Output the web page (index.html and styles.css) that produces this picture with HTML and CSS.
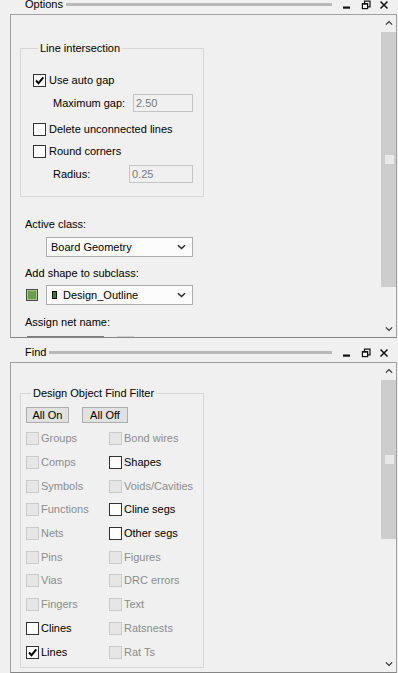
FILE: index.html
```html
<!DOCTYPE html>
<html lang="en">
<head>
  <meta charset="UTF-8" />
  <meta name="viewport" content="width=device-width, initial-scale=1.0"/>
  <title>Options / Find</title>
  <link rel="stylesheet" href="styles.css">
</head>
<body>

  <!-- Options panel -->
  <div class="titlebar titlebar-top">
    <span class="title">Options</span>
    <span class="grip"></span>
    <span class="win-btns">
      <svg class="win-icon" viewBox="0 0 10 10"><rect x="1" y="6.5" width="7" height="2.2" fill="#111"/></svg>
      <svg class="win-icon" viewBox="0 0 10 10"><path d="M3.5 3V1.2H9V6.8H7" fill="none" stroke="#111" stroke-width="1.2"/><rect x="1.4" y="3.6" width="5.2" height="5" fill="none" stroke="#111" stroke-width="1.2"/><rect x="1" y="3" width="6" height="1.6" fill="#111"/></svg>
      <svg class="win-icon" viewBox="0 0 10 10"><path d="M1.5 1.5L8.5 8.5M8.5 1.5L1.5 8.5" stroke="#111" stroke-width="1.5"/></svg>
    </span>
  </div>

  <div class="frame frame-options">
    <div class="frame-body">
      <fieldset class="group group-line">
        <legend>Line intersection</legend>
        <div class="check-row"><span class="cb is-on"><svg viewBox="0 0 11 11"><path d="M2 5.5L4.5 8.2L9.3 2.3" fill="none" stroke="#000" stroke-width="1.9"/></svg></span>Use auto gap</div>
        <div class="field-row field-gap"><span>Maximum gap:</span><span class="input is-disabled">2.50</span></div>
        <div class="check-row"><span class="cb"></span>Delete unconnected lines</div>
        <div class="check-row"><span class="cb"></span>Round corners</div>
        <div class="field-row"><span>Radius:</span><span class="input input-radius is-disabled">0.25</span></div>
      </fieldset>

      <div class="label label-active">Active class:</div>
      <div class="select-row">
        <div class="select"><span class="select-text">Board Geometry</span><svg class="chev" viewBox="0 0 9 6"><path d="M1 1.2L4.5 4.6L8 1.2" fill="none" stroke="#222" stroke-width="1.4"/></svg></div>
      </div>

      <div class="label label-sub">Add shape to subclass:</div>
      <div class="select-row select-row-sub">
        <span class="swatch"></span>
        <div class="select"><span class="mini-swatch"></span><span class="select-text">Design_Outline</span><svg class="chev" viewBox="0 0 9 6"><path d="M1 1.2L4.5 4.6L8 1.2" fill="none" stroke="#222" stroke-width="1.4"/></svg></div>
      </div>

      <div class="label label-net">Assign net name:</div>
      <div class="net-row">
        <span class="net-input"></span>
        <span class="net-btn"></span>
      </div>
    </div>
    <div class="scrollbar">
      <div class="sb-btn"><svg viewBox="0 0 9 6"><path d="M1 4.8L4.5 1.4L8 4.8" fill="none" stroke="#333" stroke-width="1.4"/></svg></div>
      <div class="sb-track">
        <div class="sb-thumb thumb-options"><span class="sb-grip"></span></div>
      </div>
      <div class="sb-btn"><svg viewBox="0 0 9 6"><path d="M1 1.2L4.5 4.6L8 1.2" fill="none" stroke="#333" stroke-width="1.4"/></svg></div>
    </div>
  </div>

  <!-- Find panel -->
  <div class="titlebar titlebar-find">
    <span class="title">Find</span>
    <span class="grip"></span>
    <span class="win-btns">
      <svg class="win-icon" viewBox="0 0 10 10"><rect x="1" y="6.5" width="7" height="2.2" fill="#111"/></svg>
      <svg class="win-icon" viewBox="0 0 10 10"><path d="M3.5 3V1.2H9V6.8H7" fill="none" stroke="#111" stroke-width="1.2"/><rect x="1.4" y="3.6" width="5.2" height="5" fill="none" stroke="#111" stroke-width="1.2"/><rect x="1" y="3" width="6" height="1.6" fill="#111"/></svg>
      <svg class="win-icon" viewBox="0 0 10 10"><path d="M1.5 1.5L8.5 8.5M8.5 1.5L1.5 8.5" stroke="#111" stroke-width="1.5"/></svg>
    </span>
  </div>

  <div class="frame frame-find">
    <div class="frame-body">
      <fieldset class="group group-find">
        <legend>Design Object Find Filter</legend>
        <div class="btn-row">
          <span class="btn btn-on">All On</span>
          <span class="btn btn-off">All Off</span>
        </div>
        <div class="filter-grid">
          <div class="filter is-disabled"><span class="cb"></span>Groups</div>
          <div class="filter is-disabled"><span class="cb"></span>Bond wires</div>
          <div class="filter is-disabled"><span class="cb"></span>Comps</div>
          <div class="filter"><span class="cb"></span>Shapes</div>
          <div class="filter is-disabled"><span class="cb"></span>Symbols</div>
          <div class="filter is-disabled"><span class="cb"></span>Voids/Cavities</div>
          <div class="filter is-disabled"><span class="cb"></span>Functions</div>
          <div class="filter"><span class="cb"></span>Cline segs</div>
          <div class="filter is-disabled"><span class="cb"></span>Nets</div>
          <div class="filter"><span class="cb"></span>Other segs</div>
          <div class="filter is-disabled"><span class="cb"></span>Pins</div>
          <div class="filter is-disabled"><span class="cb"></span>Figures</div>
          <div class="filter is-disabled"><span class="cb"></span>Vias</div>
          <div class="filter is-disabled"><span class="cb"></span>DRC errors</div>
          <div class="filter is-disabled"><span class="cb"></span>Fingers</div>
          <div class="filter is-disabled"><span class="cb"></span>Text</div>
          <div class="filter"><span class="cb"></span>Clines</div>
          <div class="filter is-disabled"><span class="cb"></span>Ratsnests</div>
          <div class="filter"><span class="cb is-on"><svg viewBox="0 0 11 11"><path d="M2 5.5L4.5 8.2L9.3 2.3" fill="none" stroke="#000" stroke-width="1.9"/></svg></span>Lines</div>
          <div class="filter is-disabled"><span class="cb"></span>Rat Ts</div>
        </div>
      </fieldset>
    </div>
    <div class="scrollbar">
      <div class="sb-btn"><svg viewBox="0 0 9 6"><path d="M1 4.8L4.5 1.4L8 4.8" fill="none" stroke="#333" stroke-width="1.4"/></svg></div>
      <div class="sb-track">
        <div class="sb-thumb thumb-find"><span class="sb-grip"></span></div>
      </div>
      <div class="sb-btn"><svg viewBox="0 0 9 6"><path d="M1 1.2L4.5 4.6L8 1.2" fill="none" stroke="#333" stroke-width="1.4"/></svg></div>
    </div>
  </div>

</body>
</html>
```

FILE: styles.css
```css
:root {
  --panel-bg: #f0f0f0;
  --frame-line: #a0a0a0;
  --group-line: #d6d6d6;
  --text: #000000;
  --text-off: #8c8c8c;
  --thumb: #cdcdcd;
}

body {
  margin: 0;
  width: 398px;
  height: 673px;
  overflow: hidden;
  background: var(--panel-bg);
  color: var(--text);
  font-family: "Liberation Sans", Arial, sans-serif;
  font-size: 11px;
  line-height: 13px;
}

/* title bars */
.titlebar {
  display: flex;
  align-items: center;
  height: 13px;
  padding-left: 25px;
  padding-right: 9px;
}

.titlebar-top {
  margin: -2px 0 3px;
}

.titlebar-find {
  margin: 8px 0 3px;
}

.title {
  white-space: nowrap;
}

.grip {
  flex: 1;
  height: 3px;
  margin: 0 10px 0 3px;
  background: #b9b9b9;
}

.win-btns {
  display: flex;
  gap: 8px;
}

.win-icon {
  width: 10px;
  height: 10px;
}

.win-btns .win-icon:first-child {
  margin-right: 1px;
}

/* docked frames */
.frame {
  display: flex;
  box-sizing: border-box;
  margin-left: 10px;
  width: 387px;
  border: 1px solid var(--frame-line);
  border-bottom-color: #858585;
  background: var(--panel-bg);
}

.frame-options {
  height: 324px;
}

.frame-find {
  height: 311px;
}

.frame-body {
  flex: 1;
  overflow: hidden;
  padding-left: 9px;
}

/* scrollbar */
.scrollbar {
  width: 15px;
  display: flex;
  flex-direction: column;
}

.sb-btn {
  height: 16px;
  display: flex;
  align-items: center;
  justify-content: center;
}

.sb-btn svg {
  width: 8px;
  height: 6px;
}

.sb-track {
  flex: 1;
}

.sb-thumb {
  background: var(--thumb);
  margin: 1px 0 0 0;
  display: flex;
  align-items: center;
  justify-content: center;
}

.thumb-options {
  height: 255px;
}

.thumb-find {
  height: 159px;
}

.sb-grip {
  width: 9px;
  height: 9px;
  background: #e9e9e9;
  margin-left: 1px;
}

/* group boxes */
.group {
  box-sizing: border-box;
  width: 184px;
  margin: 0;
  border: 1px solid var(--group-line);
  min-width: 0;
}

.group legend {
  margin-left: 5px;
  padding: 0 2px;
  line-height: 13px;
}

.group-line {
  margin-top: 27px;
  padding: 14px 10px 10px 12px;
}

.check-row {
  display: flex;
  align-items: center;
  gap: 3px;
  height: 22px;
}

.field-row {
  display: flex;
  align-items: center;
  height: 24px;
  padding-left: 20px;
}

.field-gap {
  margin-bottom: 3px;
}

.input {
  box-sizing: border-box;
  margin-left: auto;
  width: 60px;
  height: 18px;
  padding: 2px 0 0 2px;
  border: 1px solid #c4c4c4;
  background: var(--panel-bg);
}

.input-radius {
  width: 64px;
}

.input.is-disabled {
  color: #7a7a7a;
}

/* checkboxes */
.cb {
  box-sizing: border-box;
  flex: none;
  width: 13px;
  height: 13px;
  border: 1px solid #333;
  background: #fff;
  display: flex;
  align-items: center;
  justify-content: center;
}

.cb svg {
  width: 11px;
  height: 11px;
}

/* selects */
.label {
  padding-left: 5px;
  white-space: nowrap;
}

.label-active {
  margin-top: 21px;
}

.label-sub {
  margin-top: 10px;
}

.label-net {
  margin-top: 11px;
}

.select-row {
  display: flex;
  align-items: center;
  margin-top: 6px;
  padding-left: 26px;
}

.select-row-sub {
  margin-top: 5px;
  padding-left: 6px;
  gap: 8px;
}

.select {
  box-sizing: border-box;
  width: 147px;
  height: 20px;
  display: flex;
  align-items: center;
  padding: 0 4px 0 4px;
  border: 1px solid #acacac;
  background: #fcfcfc;
}

.select-text {
  flex: 1;
}

.chev {
  width: 9px;
  height: 6px;
  margin-right: 2px;
}

.swatch {
  box-sizing: border-box;
  width: 12px;
  height: 12px;
  border: 1px solid #4a4a4a;
  background: #6b9e48;
  box-shadow: inset 0 0 0 1px #a8c890;
}

.mini-swatch {
  box-sizing: border-box;
  width: 5px;
  height: 8px;
  margin: 0 6px 0 1px;
  border: 1px solid #111;
  background: #3f7d2a;
}

.net-row {
  display: flex;
  gap: 13px;
  margin-top: 7px;
  padding-left: 7px;
}

.net-input {
  box-sizing: border-box;
  width: 77px;
  height: 20px;
  border: 1px solid #7a7a7a;
  background: #fff;
}

.net-btn {
  box-sizing: border-box;
  width: 17px;
  height: 20px;
  border: 1px solid #d0d0d0;
  background: #ececec;
}

/* find filter */
.group-find {
  margin-top: 24px;
  padding: 7px 0 3px 5px;
}

.btn-row {
  display: flex;
  gap: 13px;
}

.btn {
  box-sizing: border-box;
  height: 16px;
  line-height: 14px;
  text-align: center;
  border: 1px solid #adadad;
  background: #e1e1e1;
}

.btn-on {
  width: 43px;
}

.btn-off {
  width: 46px;
}

.filter-grid {
  display: grid;
  grid-template-columns: 83px 1fr;
  grid-auto-rows: 23.7px;
  margin-top: 4px;
}

.filter {
  display: flex;
  align-items: center;
  gap: 2px;
  white-space: nowrap;
}

.filter.is-disabled {
  color: var(--text-off);
}

.filter.is-disabled .cb {
  border-color: #cacaca;
  background: #e6e6e6;
}
```
